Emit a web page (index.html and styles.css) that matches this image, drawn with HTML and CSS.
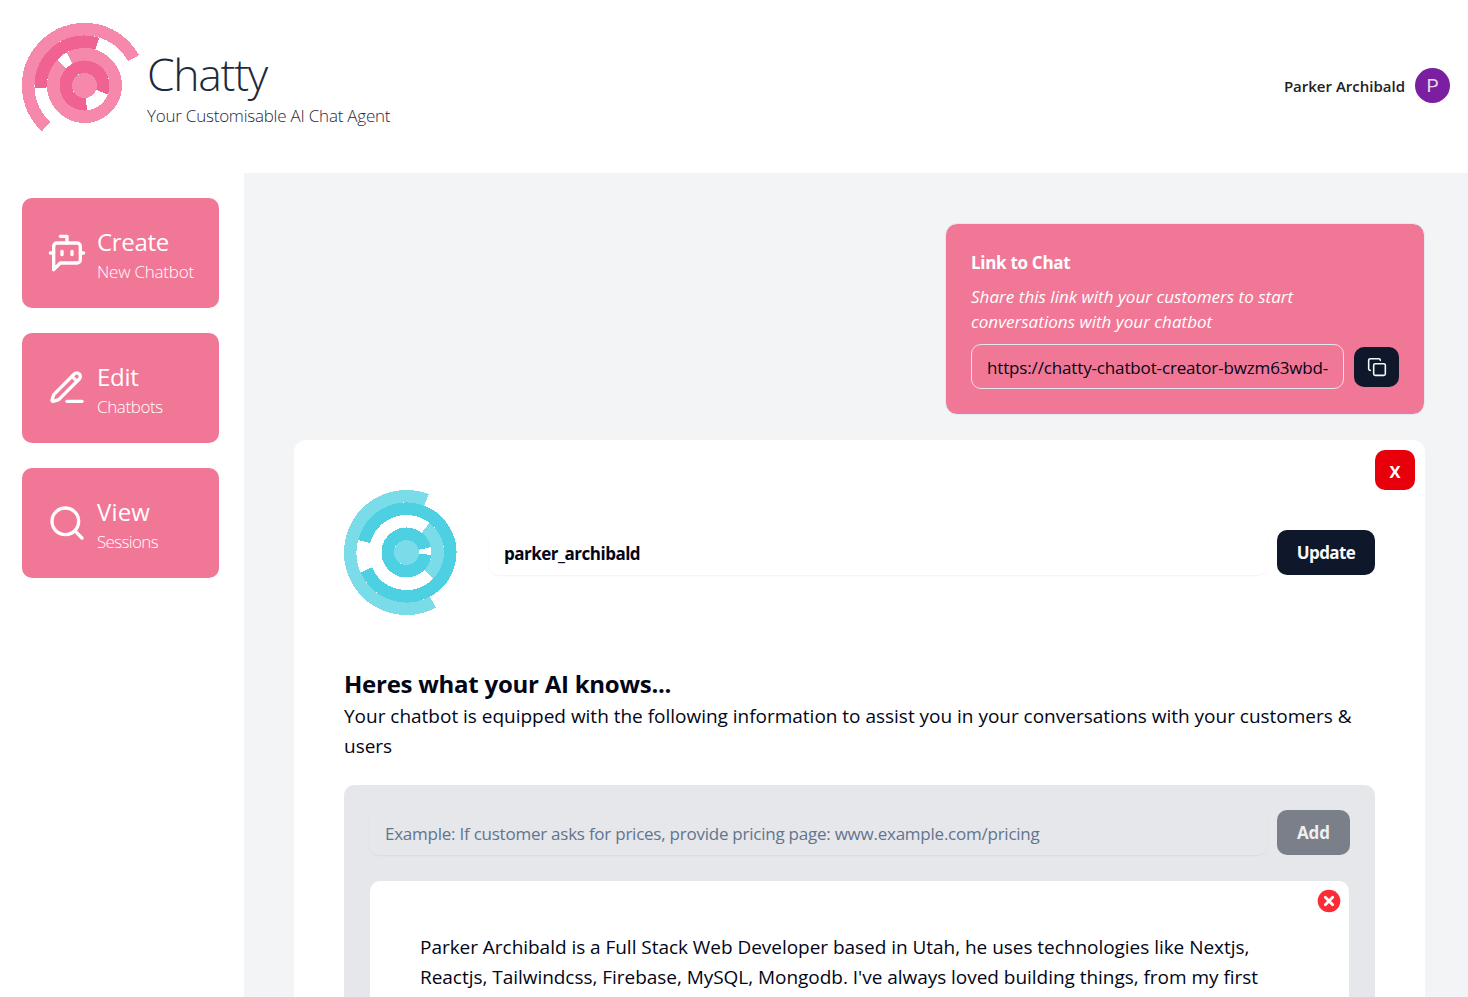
FILE: index.html
```
<!DOCTYPE html>
<html lang="en">
<head>
<meta charset="utf-8">
<title>Chatty</title>
<link rel="stylesheet" href="styles.css">
</head>
<body>
<header class="header">
  <a class="brand">
    <svg class="rings" viewBox="-62.5 -62.5 125 125" fill="none" stroke-width="12.5" shape-rendering="crispEdges">
      <circle r="12.5" fill="#f588ab"/>
      <circle r="18.75" stroke="#f06292" pathLength="360" stroke-dasharray="297 63" transform="rotate(84)"/>
      <circle r="31.25" stroke="#f588ab" pathLength="360" stroke-dasharray="342 18" transform="rotate(241.4)"/>
      <circle r="43.75" stroke="#f06292" pathLength="360" stroke-dasharray="110 250" transform="rotate(177)"/>
      <circle r="56.25" stroke="#f588ab" pathLength="360" stroke-dasharray="198 162" transform="rotate(133)"/>
    </svg>
    <div class="brand-text">
      <h1 class="brand-name">Chatty</h1>
      <p class="brand-tag">Your Customisable AI Chat Agent</p>
    </div>
  </a>
  <div class="user"><span class="user-name">Parker Archibald</span><span class="avatar">P</span></div>
</header>
<div class="layout">
  <nav class="sidebar">
    <a class="nav-card">
      <svg class="nav-icon" viewBox="0 0 24 24"><path d="M12 6V2H8"/><path d="m8 18-4 4V8a2 2 0 0 1 2-2h12a2 2 0 0 1 2 2v8a2 2 0 0 1-2 2Z"/><path d="M2 12h2"/><path d="M9 11v2"/><path d="M15 11v2"/><path d="M20 12h2"/></svg>
      <div><p class="nav-title">Create</p><p class="nav-sub nav-sub-wide">New Chatbot</p></div>
    </a>
    <a class="nav-card">
      <svg class="nav-icon" viewBox="0 0 24 24"><path d="M12 20h9"/><path d="M16.376 3.622a1 1 0 0 1 3.002 3.002L7.368 18.635a2 2 0 0 1-.855.506l-2.872.838a.5.5 0 0 1-.62-.62l.838-2.872a2 2 0 0 1 .506-.854z"/><path d="m15 5 3 3"/></svg>
      <div><p class="nav-title">Edit</p><p class="nav-sub">Chatbots</p></div>
    </a>
    <a class="nav-card">
      <svg class="nav-icon" viewBox="0 0 24 24"><circle cx="11" cy="11" r="8"/><path d="m21 21-4.3-4.3"/></svg>
      <div><p class="nav-title nav-title-wide">View</p><p class="nav-sub nav-sub-tight">Sessions</p></div>
    </a>
  </nav>
  <main class="main">
    <section class="link-card">
      <h2 class="link-title">Link to Chat</h2>
      <p class="link-desc">Share this link with your customers to start<br>conversations with your chatbot</p>
      <div class="link-row">
        <div class="link-field">https://chatty-chatbot-creator-bwzm63wbd-</div>
        <button class="copy-btn"><svg class="copy-icon" viewBox="0 0 24 24"><rect width="14" height="14" x="8" y="8" rx="2"/><path d="M4 16c-1.1 0-2-.9-2-2V4c0-1.1.9-2 2-2h10c1.1 0 2 .9 2 2"/></svg></button>
      </div>
    </section>
    <section class="bot-card">
      <button class="close-btn">X</button>
      <div class="bot-row">
        <svg class="rings" viewBox="-62.5 -62.5 125 125" fill="none" stroke-width="12.5" shape-rendering="crispEdges">
          <circle r="12.5" fill="#7bdce9"/>
          <circle r="18.75" stroke="#4dd0e1" pathLength="360" stroke-dasharray="342 18" transform="rotate(5.5)"/>
          <circle r="31.25" stroke="#7bdce9" pathLength="360" stroke-dasharray="97 263" transform="rotate(-52.3)"/>
          <circle r="43.75" stroke="#4dd0e1" pathLength="360" stroke-dasharray="322 38" transform="rotate(194.6)"/>
          <circle r="56.25" stroke="#7bdce9" pathLength="360" stroke-dasharray="228.8 131.2" transform="rotate(62)"/>
        </svg>
        <div class="field name-field">parker_archibald</div>
        <button class="btn btn-update">Update</button>
      </div>
      <h2 class="know-title">Heres what your AI knows...</h2>
      <p class="know-text">Your chatbot is equipped with the following information to assist you in your conversations with your customers &amp;<br>users</p>
      <div class="panel">
        <div class="add-row">
          <div class="field hint-field">Example: If customer asks for prices, provide pricing page: www.example.com/pricing</div>
          <button class="btn btn-add">Add</button>
        </div>
        <article class="fact">
          <svg class="fact-x" viewBox="0 0 24 24"><circle cx="12" cy="12" r="11.3" fill="#fb2c36"/><path d="M8.3 8.3l7.4 7.4M15.7 8.3l-7.4 7.4" stroke="#fff" stroke-width="2.8" stroke-linecap="round"/></svg>
          <p class="fact-text">Parker Archibald is a Full Stack Web Developer based in Utah, he uses technologies like Nextjs,<br>Reactjs, Tailwindcss, Firebase, MySQL, Mongodb. I've always loved building things, from my first</p>
        </article>
      </div>
    </section>
  </main>
</div>
</body>
</html>
```
FILE: styles.css
```
* { box-sizing: border-box; }
body, h1, h2, p { margin: 0; }
body {
  height: 997px;
  overflow: hidden;
  background: #fff;
  color: #020617;
  font-family: "Open Sans", "Noto Sans", sans-serif;
  font-size: 18px;
}
button { border: 0; padding: 0; font-family: inherit; }
.header { display: flex; justify-content: space-between; align-items: flex-start; height: 173px; padding: 23px 18px 0 22px; }
.brand { display: flex; color: #1e293b; }
.rings { width: 125px; height: 125px; flex: none; }
.brand-text { padding-top: 21px; white-space: nowrap; }
.brand-name { font-size: 44.5px; line-height: 60px; font-weight: 300; letter-spacing: -1.3px; }
.brand-tag { padding-top: 1px; font-size: 17px; line-height: 21px; font-weight: 300; letter-spacing: -.23px; }
.user { display: flex; align-items: center; gap: 10px; height: 35px; margin-top: 45px; }
.user-name { font-size: 15px; font-weight: 600; color: #212126; }
.avatar { width: 35px; height: 35px; border-radius: 50%; background: #7b1fa2; color: #e9d9ef; font: 19px/36px Roboto, sans-serif; text-align: center; }
.layout { display: flex; height: 824px; }
.sidebar { display: flex; flex-direction: column; gap: 25px; width: 244px; padding: 25px 25px 0 22px; }
.nav-card { display: flex; align-items: center; gap: 10px; height: 110px; padding: 2px 20px 0 25px; border-radius: 10px; background: #f17796; color: #fff; white-space: nowrap; }
.nav-icon { flex: none; width: 40px; height: 40px; margin-top: -2px; fill: none; stroke: currentColor; stroke-width: 2; stroke-linecap: round; stroke-linejoin: round; }
.nav-title { font-size: 24px; line-height: 35px; letter-spacing: -.3px; }
.nav-title-wide { letter-spacing: .15px; }
.nav-sub { font-size: 17px; line-height: 25px; font-weight: 300; letter-spacing: -.4px; }
.nav-sub-wide { letter-spacing: -.22px; }
.nav-sub-tight { letter-spacing: -.65px; }
.main { flex: 1; padding: 50px 43px 0 50px; background: #f3f4f6; }
.link-card { width: 480px; height: 192px; margin-left: auto; padding: 25px; border: 1px solid #e2e8f0; border-radius: 12px; background: #f17796; background-clip: padding-box; color: #fff; }
.link-title { padding-top: 1px; font-size: 17px; line-height: 25px; font-weight: 700; letter-spacing: -.3px; }
.link-desc { margin-top: 9px; font-size: 17px; line-height: 25px; font-style: italic; letter-spacing: .03px; }
.link-row { display: flex; align-items: center; gap: 10px; margin-top: 10px; }
.link-field { width: 373px; height: 45px; padding: 0 15px; overflow: hidden; border: 1px solid #e2e8f0; border-radius: 10px; color: #020617; font-size: 17px; line-height: 45px; white-space: nowrap; letter-spacing: -.15px; }
.copy-btn { display: flex; align-items: center; justify-content: center; width: 45px; height: 40px; border-radius: 10px; background: #0f172a; }
.copy-icon { width: 20px; height: 20px; fill: none; stroke: #f8fafc; stroke-width: 1.9; stroke-linecap: round; stroke-linejoin: round; }
.bot-card { position: relative; height: 557px; margin-top: 25px; padding: 50px 50px 0; border-radius: 12px 12px 0 0; background: #fff; }
.close-btn { position: absolute; top: 10px; right: 10px; width: 40px; height: 40px; padding-top: 2px; border-radius: 10px; background: #e7000b; color: #fff; font-size: 16.5px; font-weight: 700; }
.bot-row { display: flex; align-items: center; }
.field { flex: 1; height: 45px; padding: 0 15px; border-radius: 10px; box-shadow: 0 1px 2px rgba(0, 0, 0, .05); font-size: 17px; line-height: 47px; white-space: nowrap; }
.name-field { margin-left: 20px; font-weight: 700; letter-spacing: -.5px; }
.btn { height: 45px; margin-left: 10px; border-radius: 10px; background: #0f172a; color: #f8fafc; font-size: 17px; font-weight: 700; }
.btn-update { width: 98px; letter-spacing: -.6px; }
.know-title { margin-top: 50px; padding-top: 1px; font-size: 24px; line-height: 35px; font-weight: 700; letter-spacing: -.25px; }
.know-text, .fact-text { font-size: 19px; line-height: 30px; white-space: nowrap; letter-spacing: -.015px; }
.fact-text { letter-spacing: -.035px; }
.panel { height: 212px; margin-top: 24px; padding: 25px 25px 0; border-radius: 10px 10px 0 0; background: #e5e7eb; }
.add-row { display: flex; }
.hint-field { padding-left: 16px; color: #64748b; letter-spacing: -.24px; }
.btn-add { width: 73px; background: #7a7f8a; color: #eeeff1; }
.fact { position: relative; height: 116px; margin: 26px 1px 0; padding: 51px 50px 0; border-radius: 10px 10px 0 0; background: #fff; }
.fact-x { position: absolute; top: 8px; right: 8px; width: 24px; height: 24px; }
```
